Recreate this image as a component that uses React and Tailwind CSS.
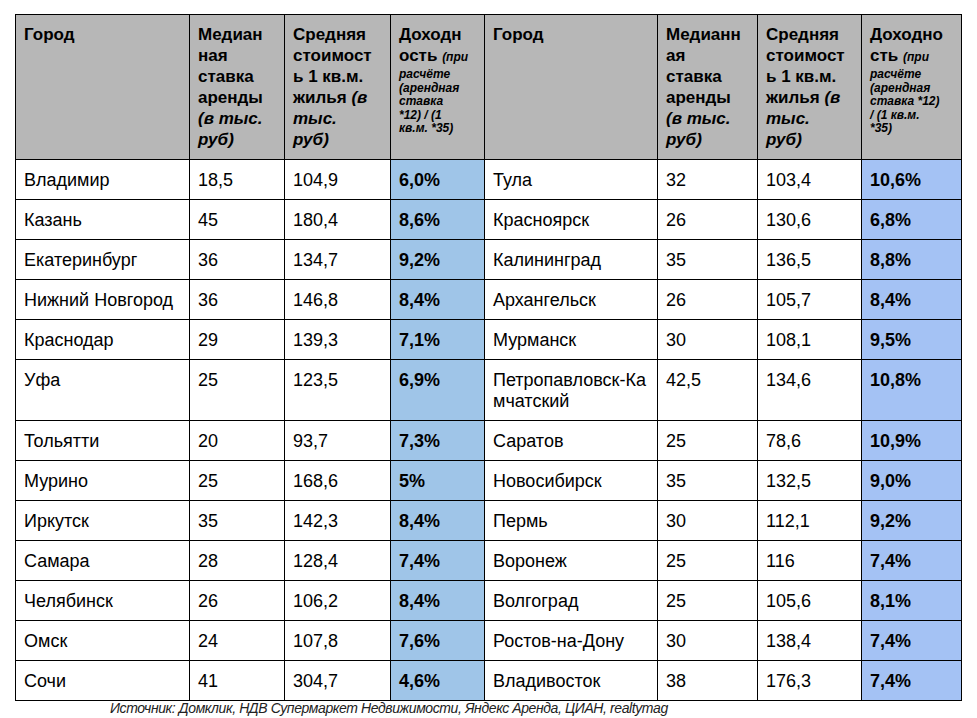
import React from 'react'

const left = [
  ['Владимир', '18,5', '104,9', '6,0%'],
  ['Казань', '45', '180,4', '8,6%'],
  ['Екатеринбург', '36', '134,7', '9,2%'],
  ['Нижний Новгород', '36', '146,8', '8,4%'],
  ['Краснодар', '29', '139,3', '7,1%'],
  ['Уфа', '25', '123,5', '6,9%'],
  ['Тольятти', '20', '93,7', '7,3%'],
  ['Мурино', '25', '168,6', '5%'],
  ['Иркутск', '35', '142,3', '8,4%'],
  ['Самара', '28', '128,4', '7,4%'],
  ['Челябинск', '26', '106,2', '8,4%'],
  ['Омск', '24', '107,8', '7,6%'],
  ['Сочи', '41', '304,7', '4,6%'],
]

const right = [
  ['Тула', '32', '103,4', '10,6%'],
  ['Красноярск', '26', '130,6', '6,8%'],
  ['Калининград', '35', '136,5', '8,8%'],
  ['Архангельск', '26', '105,7', '8,4%'],
  ['Мурманск', '30', '108,1', '9,5%'],
  [['Петропавловск-Ка', 'мчатский'], '42,5', '134,6', '10,8%'],
  ['Саратов', '25', '78,6', '10,9%'],
  ['Новосибирск', '35', '132,5', '9,0%'],
  ['Пермь', '30', '112,1', '9,2%'],
  ['Воронеж', '25', '116', '7,4%'],
  ['Волгоград', '25', '105,6', '8,1%'],
  ['Ростов-на-Дону', '30', '138,4', '7,4%'],
  ['Владивосток', '38', '176,3', '7,4%'],
]

const td = 'border border-black align-top pl-2 pr-0 pt-[10px] pb-[8px] text-[18px] leading-[21px] whitespace-nowrap'
const th = 'border border-black align-top text-left pl-2 pr-0 pt-[9px] pb-[9px] text-[17px] leading-[21px] font-bold bg-[#b7b7b7] whitespace-nowrap'
const small = 'text-[12px] leading-[13.5px] italic'

function City({ name }) {
  if (Array.isArray(name)) {
    return (
      <>
        {name[0]}
        <br />
        {name[1]}
      </>
    )
  }
  return name
}

export default function App() {
  return (
    <div
      className="w-[977px] h-[718px] bg-white text-black pt-[14px] pl-[15px] overflow-hidden"
      style={{ fontFamily: '"Liberation Sans", Arial, sans-serif' }}
    >
      <table className="border-collapse table-fixed">
        <colgroup>
          <col className="w-[174px]" />
          <col className="w-[95px]" />
          <col className="w-[106px]" />
          <col className="w-[94px]" />
          <col className="w-[173px]" />
          <col className="w-[100px]" />
          <col className="w-[104px]" />
          <col className="w-[100px]" />
        </colgroup>
        <thead>
          <tr>
            <th className={th}>Город</th>
            <th className={th}>
              Медиан<br />ная<br />ставка<br />аренды<br />
              <i>(в тыс.<br />руб)</i>
            </th>
            <th className={th}>
              Средняя<br />стоимост<br />ь 1 кв.м.<br />жилья <i>(в<br />тыс.<br />руб)</i>
            </th>
            <th className={th}>
              Доходн<br />ость <i className="text-[12px]">(при</i>
              <div className={small}>
                расчёте<br />(арендная<br />ставка<br />*12) / (1<br />кв.м. *35)
              </div>
            </th>
            <th className={th}>Город</th>
            <th className={th}>
              Медианн<br />ая<br />ставка<br />аренды<br />
              <i>(в тыс.<br />руб)</i>
            </th>
            <th className={th}>
              Средняя<br />стоимост<br />ь 1 кв.м.<br />жилья <i>(в<br />тыс.<br />руб)</i>
            </th>
            <th className={th}>
              Доходно<br />сть <i className="text-[12px]">(при</i>
              <div className={small}>
                расчёте<br />(арендная<br />ставка *12)<br />/ (1 кв.м.<br />*35)
              </div>
            </th>
          </tr>
        </thead>
        <tbody>
          {left.map((l, i) => {
            const r = right[i]
            return (
              <tr key={i}>
                <td className={td}>{l[0]}</td>
                <td className={td}>{l[1]}</td>
                <td className={td}>{l[2]}</td>
                <td className={`${td} font-bold bg-[#9fc5e8]`}>{l[3]}</td>
                <td className={td}>
                  <City name={r[0]} />
                </td>
                <td className={td}>{r[1]}</td>
                <td className={td}>{r[2]}</td>
                <td className={`${td} font-bold bg-[#a4c2f4]`}>{r[3]}</td>
              </tr>
            )
          })}
        </tbody>
      </table>
      <p className="pl-[95px] pt-0 text-[14px] italic leading-[14px] text-[#222] tracking-[-0.4px]">
        Источник: Домклик, НДВ Супермаркет Недвижимости, Яндекс Аренда, ЦИАН, realtymag
      </p>
    </div>
  )
}
